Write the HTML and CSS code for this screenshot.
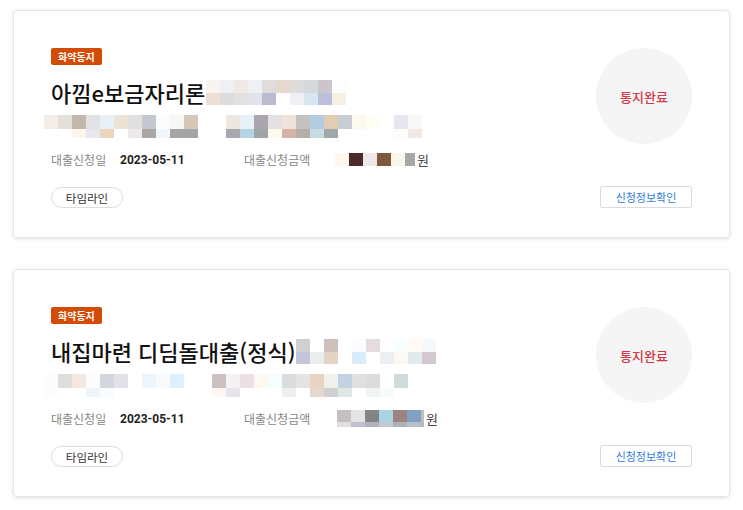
FILE: index.html
```html
<!DOCTYPE html>
<html lang="ko">
<head>
  <meta charset="UTF-8">
  <meta name="viewport" content="width=device-width, initial-scale=1.0">
  <title>대출 신청 현황</title>
  <link rel="stylesheet" href="styles.css">
</head>
<body>

  <!-- 카드 1 -->
  <div class="card">
    <div class="card-main">
      <span class="badge">화약동지</span>
      <h2 class="title">아낌e보금자리론<span class="mosaic m10 title-blur"><i style="background:#f8f4f2"></i><i style="background:#eff0f4"></i><i style="background:#efe9e6"></i><i style="background:#eff0f4"></i><i style="background:#e0dcdc"></i><i style="background:#e6d8cc"></i><i style="background:#dcdcdc"></i><i style="background:#d6d9da"></i><i style="background:#ccc6cc"></i><i style="background:#fcfdff"></i><i style="background:#efdfd2"></i><i style="background:#dcdcdc"></i><i style="background:#e2e0e2"></i><i style="background:#e2e3eb"></i><i style="background:#b9bcd0"></i><i style="background:#fff"></i><i style="background:#eff0f6"></i><i style="background:#d8e7ef"></i><i style="background:#bcc0dc"></i><i style="background:#f6f0e2"></i></span></h2>
      <div class="sub">
        <span class="mosaic m11 sub-blur"><i style="background:#f4ece6"></i><i style="background:#e3e0da"></i><i style="background:#c4b8ae"></i><i style="background:#e3e3e5"></i><i style="background:#e9f1f8"></i><i style="background:#ebe3d3"></i><i style="background:#e1dfe0"></i><i style="background:#c5c8d1"></i><i style="background:#fafcfe"></i><i style="background:#f7f7f7"></i><i style="background:#d6c8b8"></i><i style="background:#fff"></i><i style="background:#fff"></i><i style="background:#fff5ec"></i><i style="background:#e7e7ef"></i><i style="background:#ecd5bd"></i><i style="background:#fff"></i><i style="background:#efe8e8"></i><i style="background:#a9a6a4"></i><i style="background:#f0f6fc"></i><i style="background:#a5a5a5"></i><i style="background:#a5a5a5"></i></span>
        <span class="mosaic m14 sub-blur sub-second"><i style="background:#efe6e0"></i><i style="background:#e6f2f8"></i><i style="background:#aca5b0"></i><i style="background:#e3e1df"></i><i style="background:#f0e2dc"></i><i style="background:#c4c2c0"></i><i style="background:#b4cce0"></i><i style="background:#e2cdb4"></i><i style="background:#c9cdd5"></i><i style="background:#fef9f0"></i><i style="background:#fffef5"></i><i style="background:#fff"></i><i style="background:#e6e6f0"></i><i style="background:#faf8f6"></i><i style="background:#a8a8b0"></i><i style="background:#b4d4e4"></i><i style="background:#a0a6a8"></i><i style="background:#fefaf2"></i><i style="background:#d4b4a4"></i><i style="background:#b4b0a8"></i><i style="background:#c8dce4"></i><i style="background:#a0a8a8"></i><i style="background:#fff"></i><i style="background:#fff"></i><i style="background:#fff"></i><i style="background:#fff"></i><i style="background:#fefcf8"></i><i style="background:#f2e8e6"></i></span>
      </div>
      <div class="info">
        <span class="label">대출신청일</span>
        <span class="value">2023-05-11</span>
        <span class="label label-amount">대출신청금액</span>
        <span class="amount"><span class="mosaic m6 amount-blur"><i style="background:#fff8ec"></i><i style="background:#4a2a2a"></i><i style="background:#f0e8e8"></i><i style="background:#80583c"></i><i style="background:#fbf6ea"></i><i style="background:#a8a8a8"></i></span>원</span>
      </div>
      <button class="btn-timeline">타임라인</button>
    </div>
    <div class="card-side">
      <div class="status">통지완료</div>
      <button class="btn-detail">신청정보확인</button>
    </div>
  </div>

  <!-- 카드 2 -->
  <div class="card">
    <div class="card-main">
      <span class="badge">화약동지</span>
      <h2 class="title">내집마련 디딤돌대출(정식)<span class="mosaic m10 title-blur"><i style="background:#d0d0d4"></i><i style="background:#fff"></i><i style="background:#ccc0b8"></i><i style="background:#fff"></i><i style="background:#fafcff"></i><i style="background:#e4dce0"></i><i style="background:#fff"></i><i style="background:#f6fefe"></i><i style="background:#fffaf6"></i><i style="background:#f6f8fc"></i><i style="background:#c4c4dc"></i><i style="background:#eceeee"></i><i style="background:#e4d4c4"></i><i style="background:#fff"></i><i style="background:#d8ecfc"></i><i style="background:#fff"></i><i style="background:#eeeff4"></i><i style="background:#fcf8f4"></i><i style="background:#e2eaee"></i><i style="background:#d4c8d0"></i></span></h2>
      <div class="sub">
        <span class="mosaic m10 sub-blur"><i style="background:#fcfcfc"></i><i style="background:#dcdedc"></i><i style="background:#f4e8e0"></i><i style="background:#fcfcfc"></i><i style="background:#d4d6de"></i><i style="background:#e4e0e8"></i><i style="background:#fff"></i><i style="background:#ecf6fe"></i><i style="background:#f8fafc"></i><i style="background:#dcf0fe"></i><i style="background:#fcfcfc"></i><i style="background:#fff"></i><i style="background:#fff"></i><i style="background:#eef4fa"></i><i style="background:#f8fcfc"></i><i style="background:#fff"></i><i style="background:#fff"></i><i style="background:#fff"></i><i style="background:#fff"></i><i style="background:#fff"></i></span>
        <span class="mosaic m14 sub-blur sub-second2"><i style="background:#ccc0c0"></i><i style="background:#f4f2f4"></i><i style="background:#ece0e4"></i><i style="background:#fff8f0"></i><i style="background:#f4feff"></i><i style="background:#dcdcdc"></i><i style="background:#e4e4e2"></i><i style="background:#e8d4c0"></i><i style="background:#f0f0ec"></i><i style="background:#c4d0e4"></i><i style="background:#e0e0e0"></i><i style="background:#dcdcdc"></i><i style="background:#fff"></i><i style="background:#d0dcdc"></i><i style="background:#fff8f0"></i><i style="background:#e8e4ee"></i><i style="background:#fff"></i><i style="background:#fff"></i><i style="background:#fff"></i><i style="background:#eef0f0"></i><i style="background:#fff"></i><i style="background:#e4d8d0"></i><i style="background:#d0d0d0"></i><i style="background:#e0e8e4"></i><i style="background:#fff"></i><i style="background:#f0f4f4"></i><i style="background:#f8fafc"></i><i style="background:#fff"></i></span>
      </div>
      <div class="info">
        <span class="label">대출신청일</span>
        <span class="value">2023-05-11</span>
        <span class="label label-amount">대출신청금액</span>
        <span class="amount amount-2"><span class="mosaic m7 amount-blur amount-tall"><i style="background:#c4c0c0"></i><i style="background:#e4e4e4"></i><i style="background:#848484"></i><i style="background:#a8d4e4"></i><i style="background:#9c8480"></i><i style="background:#80a0c4"></i><i style="background:#c0c0c0"></i><i style="background:#e0e0e0"></i><i style="background:#c0c0d0"></i><i style="background:#b0b0c0"></i><i style="background:#c0c8d0"></i><i style="background:#b0b0b0"></i><i style="background:#b8c0c8"></i><i style="background:#b0b8c0"></i></span>원</span>
      </div>
      <button class="btn-timeline">타임라인</button>
    </div>
    <div class="card-side">
      <div class="status">통지완료</div>
      <button class="btn-detail">신청정보확인</button>
    </div>
  </div>

</body>
</html>
```

FILE: styles.css
```css
body {
  margin: 0;
  padding: 10px 14px 0 13px;
  background: #fff;
  font-family: "Noto Sans CJK KR", "Noto Sans", sans-serif;
  color: #222;
}

/* 카드 */
.card {
  display: flex;
  justify-content: space-between;
  width: 717px;
  height: 228px;
  box-sizing: border-box;
  margin-bottom: 31px;
  padding: 37px 37px 29px 37px;
  border: 1px solid #e6e6e6;
  border-radius: 4px;
  box-shadow: 0 1px 4px rgba(0, 0, 0, 0.12);
}

.card-main {
  display: flex;
  flex-direction: column;
  align-items: flex-start;
}

/* 뱃지 */
.badge {
  display: inline-block;
  height: 17px;
  line-height: 17px;
  padding: 0 7px;
  border-radius: 2px;
  background: #d24c05;
  color: #fff;
  font-size: 10px;
  font-weight: 700;
}

.title {
  display: flex;
  align-items: center;
  height: 30px;
  margin: 12px 0 0;
  font-size: 22px;
  font-weight: 500;
  line-height: 30px;
  color: #111;
}

/* 모자이크 처리 */
.mosaic {
  display: inline-grid;
  grid-auto-rows: 13px;
}

.mosaic i {
  display: block;
}

.m6 { grid-template-columns: repeat(5, 14px) 10px; }
.m7 { grid-template-columns: repeat(6, 14px) 3px; }
.m10 { grid-template-columns: repeat(10, 14px); }
.m11 { grid-template-columns: repeat(11, 14px); }
.m14 { grid-template-columns: repeat(14, 14px); }

.title-blur {
  margin-left: 1px;
  grid-auto-rows: 13px 12px;
}

.sub {
  display: flex;
  height: 23px;
  margin: 8px 0 0 -7px;
}

.sub-blur {
  grid-auto-rows: 14px 9px;
}

.sub-second {
  margin-left: 28px;
}

.sub-second2 {
  margin-left: 28px;
}

/* 신청 정보 */
.info {
  display: flex;
  align-items: center;
  height: 20px;
  margin-top: 12px;
  font-size: 12px;
}

.label {
  width: 69px;
  color: #888;
}

.value {
  width: 124px;
  font-family: Roboto, "Noto Sans CJK KR", sans-serif;
  font-weight: 700;
  font-size: 12px;
  color: #222;
}

.label-amount {
  width: 91px;
}

.amount {
  display: flex;
  align-items: center;
  font-size: 13px;
  color: #444;
}

.amount-2 {
  margin-left: 2px;
}

.amount-blur {
  grid-auto-rows: 13px;
  margin-right: 2px;
}

.amount-tall {
  grid-auto-rows: 12px 5px;
}

/* 버튼 */
button {
  font-family: inherit;
  cursor: pointer;
  background: #fff;
}

.btn-timeline {
  margin-top: 18px;
  width: 72px;
  height: 22px;
  padding: 0;
  border: 1px solid #dcdcdc;
  border-radius: 11px;
  font-size: 11.5px;
  color: #333;
}

.card-side {
  display: flex;
  flex-direction: column;
  align-items: flex-end;
  justify-content: space-between;
}

.status {
  display: flex;
  align-items: center;
  justify-content: center;
  width: 96px;
  height: 96px;
  border-radius: 50%;
  background: #f5f5f5;
  color: #d23a48;
  font-size: 13px;
  font-weight: 500;
}

.btn-detail {
  width: 92px;
  height: 22px;
  padding: 0;
  border: 1px solid #dcdcdc;
  border-radius: 2px;
  font-size: 11px;
  color: #2f7de1;
}
```
